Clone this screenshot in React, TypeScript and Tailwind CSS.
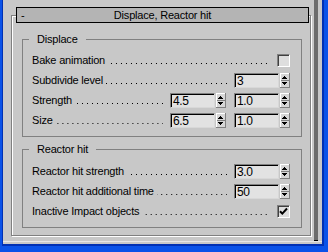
import React from "react";

const leader =
  "flex-1 self-start h-px mt-[13px] ml-[3px] bg-[linear-gradient(to_left,#000_1px,transparent_1px)] bg-[length:5px_1px] bg-repeat-x bg-right";

function SpinArrows() {
  return (
    <svg width="10" height="15" viewBox="0 0 10 15" shapeRendering="crispEdges" className="block">
      <rect x="0" y="0" width="10" height="15" fill="#d6d6d6" />
      <rect x="0" y="0" width="10" height="1" fill="#ffffff" />
      <rect x="0" y="0" width="1" height="15" fill="#ffffff" />
      <rect x="0" y="14" width="10" height="1" fill="#808080" />
      <rect x="9" y="0" width="1" height="15" fill="#808080" />
      <rect x="1" y="7" width="8" height="1" fill="#808080" />
      {/* up */}
      <rect x="4" y="3" width="1" height="1" fill="#000" />
      <rect x="3" y="4" width="3" height="1" fill="#000" />
      <rect x="2" y="5" width="5" height="1" fill="#000" />
      {/* down */}
      <rect x="2" y="9" width="5" height="1" fill="#000" />
      <rect x="3" y="10" width="3" height="1" fill="#000" />
      <rect x="4" y="11" width="1" height="1" fill="#000" />
    </svg>
  );
}

function Spinner({ value }: { value: string }) {
  return (
    <div className="flex items-center gap-[1px]">
      <div className="w-[45px] h-[15px] bg-[#e2e2e2] border border-t-[#808080] border-l-[#808080] border-b-[#d8d8d8] border-r-[#d8d8d8] shadow-[inset_1px_1px_0_#000] pl-[2px] leading-[14px] text-[12px] tracking-[-0.4px] text-black">
        {value}
      </div>
      <SpinArrows />
    </div>
  );
}

function Checkbox({ checked }: { checked?: boolean }) {
  return (
    <div className="w-[13px] h-[13px] bg-[#dedede] border border-t-[#808080] border-l-[#808080] border-b-white border-r-white shadow-[inset_1px_1px_0_#404040] flex items-center justify-center">
      {checked && (
        <svg width="9" height="9" viewBox="0 0 9 9" className="block">
          <path d="M1 4.2L3.3 6.6L8 1.5" fill="none" stroke="#000" strokeWidth="2" />
        </svg>
      )}
    </div>
  );
}

function Row({ label, children, gap = "mr-[7px]" }: { label: string; children: React.ReactNode; gap?: string }) {
  return (
    <div className="flex items-center h-[20px]">
      <span className="whitespace-nowrap">{label}</span>
      <span className={`${leader} ${gap}`} />
      {children}
    </div>
  );
}

export default function App() {
  return (
    <div className="w-[328px] h-[252px] bg-[#0a52e8] pl-[2px] pr-[4px] pb-[6px] font-['Liberation_Sans',Arial,sans-serif] text-[11px] tracking-[-0.2px] text-black">
      <div className="h-full border-l border-r-2 border-b-2 border-[#0030b4]">
        <div className="h-full bg-[#c8c8c8] flex flex-col">
          <div className="h-[241px] flex items-start">
            {/* rollout frame */}
            <div className="ml-[8px] mt-[15px] w-[300px] h-[221px] border border-[#808080] shadow-[inset_1px_1px_0_#fff,1px_1px_0_#fff]">
              {/* title bar */}
              <div className="-mt-[9px] ml-[4px] w-[293px] h-[16px] bg-[#b4b4b4] border border-black grid grid-cols-[1fr_auto_1fr] items-center leading-[14px]">
                <span className="pl-[4px]">-</span>
                <span>Displace, Reactor hit</span>
                <span />
              </div>

              <fieldset className="mt-[9px] ml-[10px] w-[280px] border border-[#808080] pt-[3px] pb-[6px] pl-[9px] pr-[11px]">
                <legend className="ml-[-3px] px-[8px] leading-[15px]">Displace</legend>
                <Row label="Bake animation" gap="mr-[10px]">
                  <Checkbox />
                </Row>
                <Row label="Subdivide level">
                  <Spinner value="3" />
                </Row>
                <Row label="Strength">
                  <div className="flex gap-[8px]">
                    <Spinner value="4.5" />
                    <Spinner value="1.0" />
                  </div>
                </Row>
                <Row label="Size">
                  <div className="flex gap-[8px]">
                    <Spinner value="6.5" />
                    <Spinner value="1.0" />
                  </div>
                </Row>
              </fieldset>

              <fieldset className="mt-[5px] ml-[10px] w-[280px] border border-[#808080] pt-[4px] pb-[6px] pl-[9px] pr-[11px]">
                <legend className="ml-[-3px] px-[8px] leading-[15px]">Reactor hit</legend>
                <Row label="Reactor hit strength">
                  <Spinner value="3.0" />
                </Row>
                <Row label="Reactor hit additional time">
                  <Spinner value="50" />
                </Row>
                <Row label="Inactive Impact objects" gap="mr-[10px]">
                  <Checkbox checked />
                </Row>
              </fieldset>
            </div>
            {/* scroll strip */}
            <div className="ml-[3px] w-[4px] h-[241px] bg-[#6c6c6c] border-b border-black" />
          </div>
          <div className="h-px bg-[#e6e6e6]" />
        </div>
      </div>
    </div>
  );
}
